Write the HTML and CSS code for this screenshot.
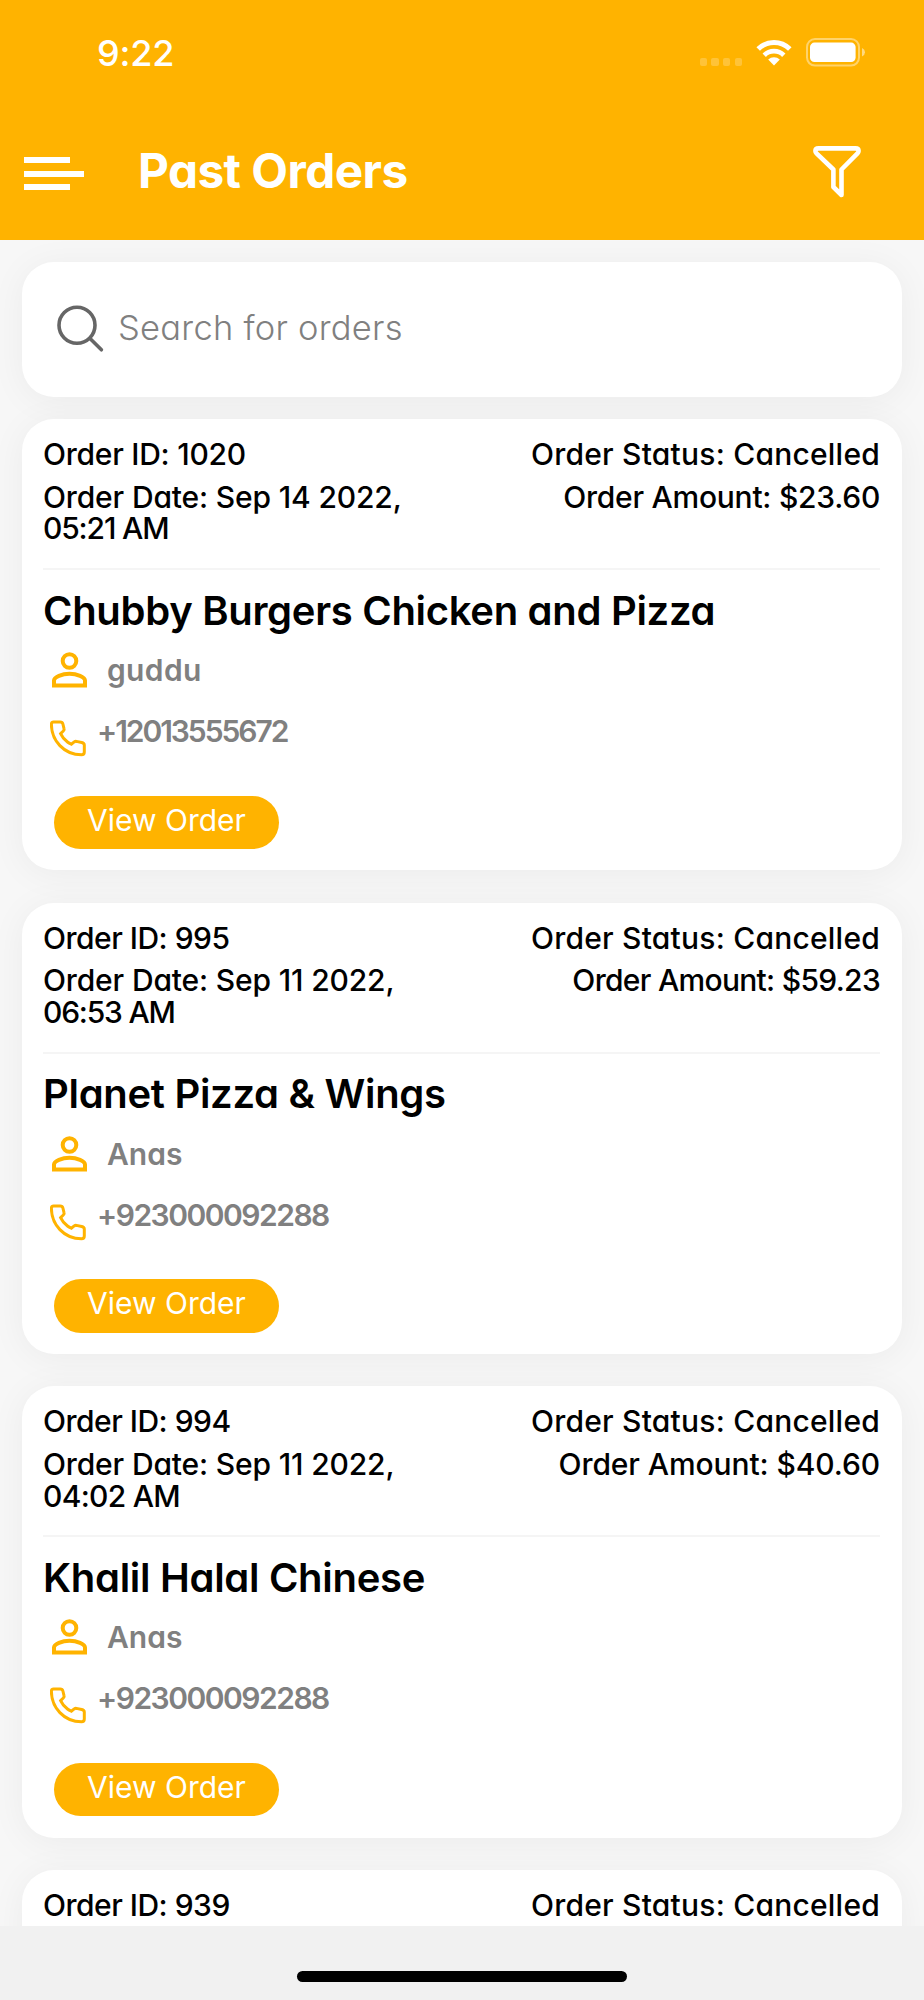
FILE: index.html
```html
<!DOCTYPE html>
<html lang="en">
<head>
<meta charset="utf-8">
<title>Past Orders</title>
<link rel="stylesheet" href="styles.css">
</head>
<body>
<svg class="defs" aria-hidden="true">
  <symbol id="user" viewBox="0 0 36 36"><circle cx="17.5" cy="9" r="6.8"/><path d="M2 33.5V28.5C2 25 10 21.8 17.5 21.8S33 25 33 28.5V33.5Z"/></symbol>
  <symbol id="phone" viewBox="0 0 37 37"><path d="M3.5 1.9H10.2Q12.4 1.9 12.9 4L14 8.6Q14.4 10 13.3 11L10.6 13.6Q12.5 18 17.5 22Q19 23.3 21.3 24.2L24.2 21.9Q25.2 21.2 26.4 21.4L31.7 22.5Q34.3 23.1 34.3 25V32Q34.3 34.8 31.5 34.8C14 34.8 1.4 20.5 1.4 4.4Q1.4 1.9 3.5 1.9Z"/></symbol>
</svg>
<div class="screen">
  <header class="header">
    <div class="status">
      <span class="time">9:22</span>
      <div class="indicators">
        <span class="dots"><i></i><i></i><i></i><i></i></span>
        <svg class="wifi" viewBox="0 0 36 27"><path d="M2.2 9.9A22.4 22.4 0 0 1 33.8 9.9" stroke-width="5"/><path d="M8.2 16.2A14 14 0 0 1 27.8 16.2" stroke-width="4.8"/><path d="M18 26.4L12.2 20.6A8.2 8.2 0 0 1 23.8 20.6Z" class="solid"/></svg>
        <svg class="battery" viewBox="0 0 60 29"><rect x="1" y="1" width="52" height="26.6" rx="8" fill="none" stroke="#fff" stroke-opacity=".42" stroke-width="2"/><rect x="4" y="4.6" width="45.6" height="19.4" rx="4.5" fill="#fff"/><path d="M56 10Q59 11.5 59 14.3T56 18.6Z" fill="#fff" fill-opacity=".5"/></svg>
      </div>
    </div>
    <div class="titlebar">
      <div class="menu"><i></i><i class="long"></i><i></i></div>
      <h1>Past Orders</h1>
      <svg class="filter" viewBox="0 0 48 52"><path d="M5.5 2.4H42.5Q45.6 2.4 45.6 5Q45.6 6.2 44.5 7.3L28.5 23.5V49L20.4 41V23.5L3.5 7.3Q2.4 6.2 2.4 5Q2.4 2.4 5.5 2.4Z"/></svg>
    </div>
  </header>
  <main class="list">
    <div class="search">
      <svg viewBox="0 0 48 48"><circle cx="20" cy="20.3" r="18"/><path d="M33 33.4L44.4 44.8"/></svg>
      <span>Search for orders</span>
    </div>
    <article class="card">
      <div class="top">
        <div class="left"><div class="id four">Order ID: 1020</div><div class="date">Order Date: Sep 14 2022, <span class="t1">05:21 AM</span></div></div>
        <div class="right"><div>Order Status: Cancelled</div><div class="a1">Order Amount: $23.60</div></div>
      </div>
      <h2 class="n1">Chubby Burgers Chicken and Pizza</h2>
      <div class="user"><svg><use href="#user"/></svg><span class="guddu">guddu</span></div>
      <div class="phone"><svg><use href="#phone"/></svg><span class="us">+12013555672</span></div>
      <button>View Order</button>
    </article>
    <article class="card">
      <div class="top">
        <div class="left"><div class="id">Order ID: 995</div><div class="date">Order Date: Sep 11 2022, <span class="t2">06:53 AM</span></div></div>
        <div class="right"><div>Order Status: Cancelled</div><div class="a2">Order Amount: $59.23</div></div>
      </div>
      <h2 class="n2">Planet Pizza &amp; Wings</h2>
      <div class="user"><svg><use href="#user"/></svg><span>Anas</span></div>
      <div class="phone"><svg><use href="#phone"/></svg><span>+923000092288</span></div>
      <button>View Order</button>
    </article>
    <article class="card">
      <div class="top">
        <div class="left"><div class="id">Order ID: 994</div><div class="date">Order Date: Sep 11 2022, <span class="t3">04:02 AM</span></div></div>
        <div class="right"><div>Order Status: Cancelled</div><div class="a3">Order Amount: $40.60</div></div>
      </div>
      <h2 class="n3">Khalil Halal Chinese</h2>
      <div class="user"><svg><use href="#user"/></svg><span>Anas</span></div>
      <div class="phone"><svg><use href="#phone"/></svg><span>+923000092288</span></div>
      <button>View Order</button>
    </article>
    <article class="card">
      <div class="top cut">
        <div class="left"><div class="id">Order ID: 939</div></div>
        <div class="right"><div>Order Status: Cancelled</div></div>
      </div>
    </article>
  </main>
  <footer class="home"><div></div></footer>
</div>
</body>
</html>
```
FILE: styles.css
```css
* { box-sizing: border-box; }
body { margin: 0; font-family: Inter, "Liberation Sans", sans-serif; font-feature-settings: "cv11"; color: #000; }
.defs { display: none; }
.screen { width: 924px; height: 2000px; overflow: hidden; display: flex; flex-direction: column; background: #f7f7f7; }

.header { flex: none; height: 240px; background: #ffb300; color: #fff; }
.status { display: flex; justify-content: space-between; height: 140.5px; padding: 31px 58px 0 97px; }
.time { font-size: 36px; line-height: 44px; font-weight: 550; letter-spacing: -.2px; }
.indicators { display: flex; align-items: flex-start; padding-top: 7px; }
.dots { display: flex; gap: 4.2px; margin: 20.3px 14px 0 0; }
.dots i { width: 7.4px; height: 7.4px; border-radius: 2px; background: #fff; opacity: .22; }
.wifi { width: 36px; height: 27px; margin: 1px 14px 0 0; fill: none; stroke: #fff; }
.wifi .solid { fill: #fff; stroke: none; }
.battery { width: 60px; height: 29px; }
.titlebar { display: flex; align-items: flex-start; padding: 0 63px 0 24px; }
.menu { display: flex; flex-direction: column; gap: 7.5px; width: 60px; padding-top: 16.5px; }
.menu i { width: 46px; height: 6px; background: #fff; }
.menu .long { width: 60px; }
h1 { margin: 0 0 0 54px; font-size: 47.7px; line-height: 60px; font-weight: 690; letter-spacing: -.55px; }
.filter { width: 48px; height: 52px; margin: 5.5px 0 0 auto; fill: none; stroke: #fff; stroke-width: 4.6; stroke-linejoin: round; }

.list { height: 1686px; overflow: hidden; display: flex; flex-direction: column; padding: 21.5px 22px 0; }
.search, .card { flex: none; background: #fff; border-radius: 32px; box-shadow: 0 4px 36px rgba(0, 0, 0, .05); }
.search { display: flex; align-items: center; height: 135.5px; margin-bottom: 22px; padding: 0 35px; }
.search svg { width: 48px; height: 48px; fill: none; stroke: #666; stroke-width: 3.6; stroke-linecap: round; }
.search span { margin-left: 13px; margin-top: -2px; font-size: 34.5px; line-height: 44px; font-weight: 330; letter-spacing: .25px; color: #808080; }

.card { height: 451.2px; margin-bottom: 32.5px; padding: 20px 22px 0 21px; }
.top { display: flex; justify-content: space-between; height: 131px; border-bottom: 2px solid #f5f5f5; font-size: 30px; line-height: 31.5px; font-weight: 500; }
.cut { border: 0; }
.left { width: 419px; }
.right { width: 418px; text-align: right; letter-spacing: .22px; }
.left > div + div, .right > div + div { margin-top: 11.2px; }
.id { letter-spacing: -.5px; }
.four { letter-spacing: -.25px; }
.date { letter-spacing: -.15px; }
.t1 { letter-spacing: -1.15px; }
.t2 { letter-spacing: -1.2px; }
.t3 { letter-spacing: -.7px; }
.a1 { letter-spacing: -.25px; }
.a2 { letter-spacing: -.7px; }
.a3 { letter-spacing: -.1px; }
h2 { margin: 16.5px 0 17.5px; font-size: 40px; line-height: 48px; font-weight: 600; white-space: nowrap; }
.n1 { letter-spacing: -.3px; }
.n2 { letter-spacing: -.3px; }
.n3 { letter-spacing: -.3px; }
.user, .phone { display: flex; align-items: flex-start; font-size: 30px; line-height: 36px; font-weight: 600; color: #808080; }
.user svg, .phone svg { fill: none; stroke: #ffb300; flex: none; }
.user { height: 36px; padding-left: 9px; margin-bottom: 25px; }
.user svg { width: 36px; height: 36px; stroke-width: 4; margin-right: 19px; }
.guddu { letter-spacing: .35px; }
.phone { height: 43px; padding-left: 7px; margin-bottom: 39.5px; }
.phone svg { width: 37px; height: 37px; stroke-width: 3; margin: 7px 10px 0 0; }
.phone span { letter-spacing: -1.5px; }
.phone .us { letter-spacing: -2.05px; }
button { display: block; width: 225px; height: 53.5px; margin: 0 0 0 11px; padding: 0 0 5.5px; border: 0; border-radius: 27px; background: #ffb300; color: #fff; font: 430 30px/48px Inter, "Liberation Sans", sans-serif; letter-spacing: 0; }

.home { flex: 1; display: flex; justify-content: center; align-items: flex-start; padding-top: 45px; background: #f1f1f1; }
.home div { width: 330px; height: 11px; border-radius: 6px; background: #000; }
```
